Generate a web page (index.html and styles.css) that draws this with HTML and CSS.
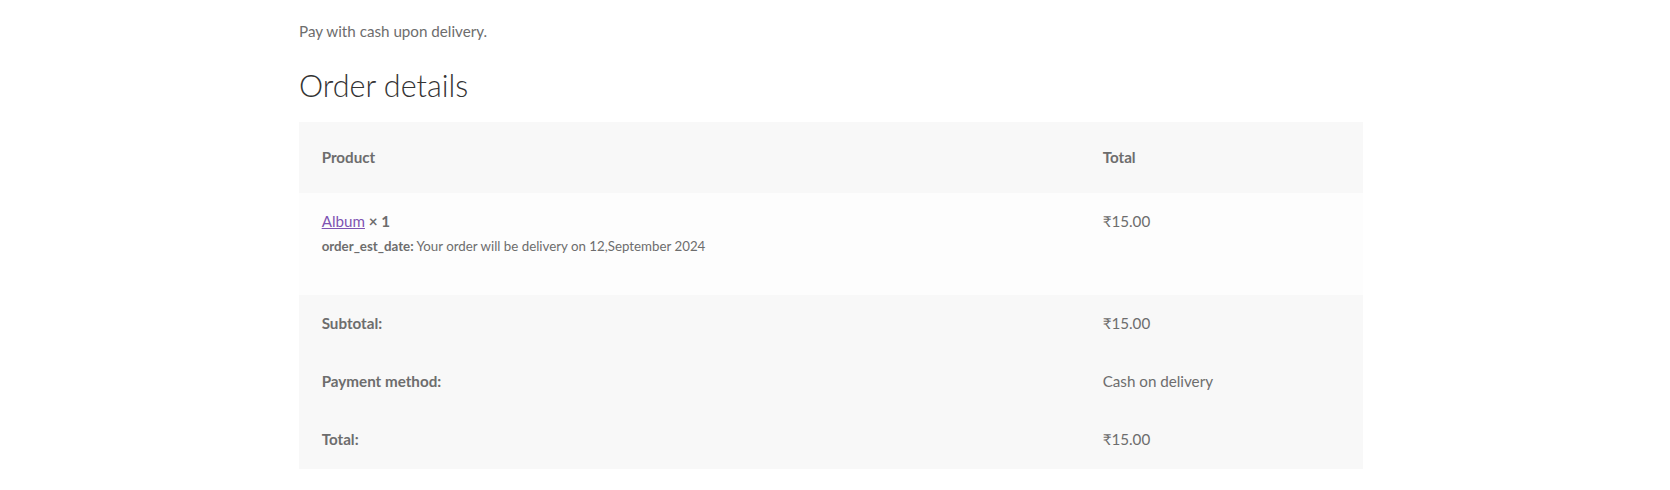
FILE: index.html
```html
<!DOCTYPE html>
<html lang="en">
<head>
<meta charset="utf-8">
<title>Order details</title>
<link rel="stylesheet" href="styles.css">
</head>
<body>
<main class="page">
  <p class="payment-note">Pay with cash upon delivery.</p>
  <section class="order-details">
    <h2 class="order-title">Order details</h2>
    <table class="order-table">
      <colgroup>
        <col class="col-product">
        <col class="col-total">
      </colgroup>
      <thead>
        <tr>
          <th>Product</th>
          <th>Total</th>
        </tr>
      </thead>
      <tbody>
        <tr>
          <td class="product-name">
            <a href="#" class="product-link">Album</a> <strong class="qty">× 1</strong>
            <ul class="item-meta">
              <li><strong class="meta-label">order_est_date:</strong> <span>Your order will be delivery on 12,September 2024</span></li>
            </ul>
          </td>
          <td class="product-total">₹15.00</td>
        </tr>
      </tbody>
      <tfoot>
        <tr>
          <th>Subtotal:</th>
          <td>₹15.00</td>
        </tr>
        <tr>
          <th>Payment method:</th>
          <td>Cash on delivery</td>
        </tr>
        <tr>
          <th>Total:</th>
          <td>₹15.00</td>
        </tr>
      </tfoot>
    </table>
  </section>
</main>
</body>
</html>
```

FILE: styles.css
```css
* {
  box-sizing: border-box;
}

html, body {
  margin: 0;
  padding: 0;
  background: #ffffff;
}

body {
  font-family: "Lato", "Liberation Sans", "DejaVu Sans", sans-serif;
  font-size: 15.2px;
  line-height: 25.9px;
  color: #6d6d6d;
  padding-top: 19px;
}

.page {
  width: 1064px;
  margin-left: calc(50% - 536px);
}

.payment-note {
  margin: 0 0 19.5px;
}

.order-title {
  margin: 0 0 15.5px;
  font-size: 30.5px;
  line-height: 42px;
  font-weight: 300;
  color: #333333;
}

.order-table {
  width: 100%;
  border-collapse: collapse;
  border-spacing: 0;
  table-layout: fixed;
}

.col-product {
  width: 781px;
}

.col-total {
  width: 283px;
}

.order-table th,
.order-table td {
  text-align: left;
  vertical-align: top;
  padding: 16px 22.65px;
  line-height: 25.9px;
}

.order-table th {
  font-weight: 700;
}

.order-table thead th {
  padding: 22.65px;
  vertical-align: middle;
  background-color: #f8f8f8;
}

.order-table tbody td {
  background-color: #fdfdfd;
}

.order-table tfoot th,
.order-table tfoot td {
  background-color: #f8f8f8;
}

.product-link {
  color: #7f54b3;
  text-decoration: underline;
}

.qty {
  font-weight: 700;
}

.item-meta {
  list-style: none;
  margin: 0 0 21.5px;
  padding: 0;
  font-size: 13.3px;
  line-height: 22.65px;
}

.meta-label {
  font-weight: 700;
}
```
